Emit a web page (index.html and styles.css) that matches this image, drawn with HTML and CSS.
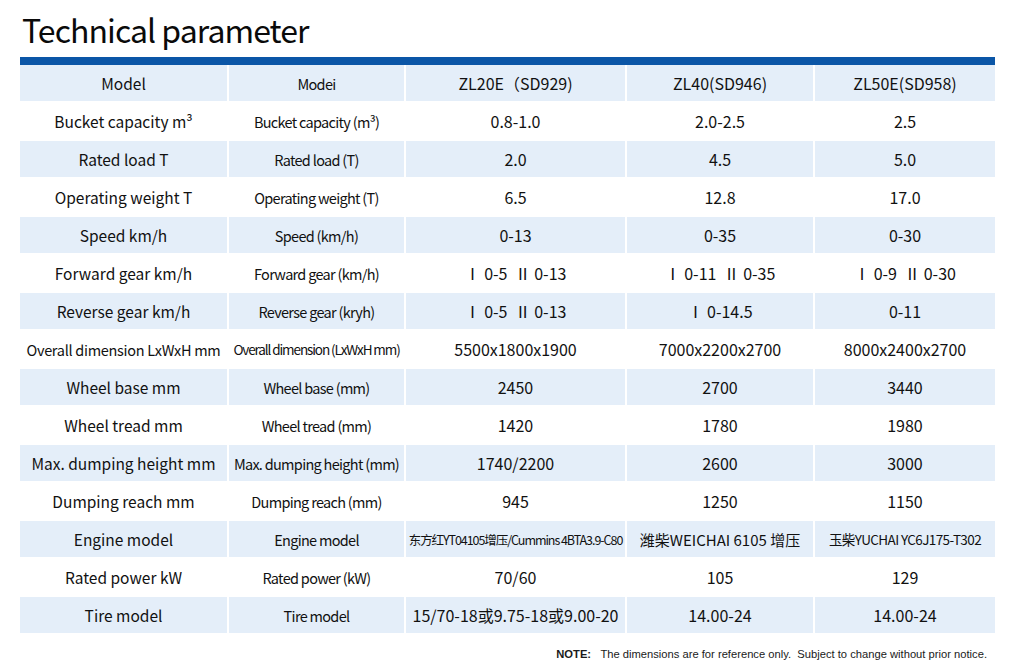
FILE: index.html
```html
<!DOCTYPE html>
<html lang="en">
<head>
<meta charset="utf-8">
<title>Technical parameter</title>
<link rel="stylesheet" href="styles.css">
</head>
<body>
<div class="page">
  <h1 class="title">Technical parameter</h1>
  <div class="bar"></div>
  <div class="table">
    <div class="row shade"><div class="c c1">Model</div><div class="c c2">Modei</div><div class="c">ZL20E（SD929)</div><div class="c">ZL40(SD946)</div><div class="c">ZL50E(SD958)</div></div>
    <div class="row"><div class="c c1">Bucket capacity m³</div><div class="c c2">Bucket capacity (m³)</div><div class="c">0.8-1.0</div><div class="c">2.0-2.5</div><div class="c">2.5</div></div>
    <div class="row shade"><div class="c c1">Rated load T</div><div class="c c2">Rated load (T)</div><div class="c">2.0</div><div class="c">4.5</div><div class="c">5.0</div></div>
    <div class="row"><div class="c c1">Operating weight T</div><div class="c c2">Operating weight (T)</div><div class="c">6.5</div><div class="c">12.8</div><div class="c">17.0</div></div>
    <div class="row shade"><div class="c c1">Speed km/h</div><div class="c c2">Speed (km/h)</div><div class="c">0-13</div><div class="c">0-35</div><div class="c">0-30</div></div>
    <div class="row"><div class="c c1">Forward gear km/h</div><div class="c c2">Forward gear (km/h)</div><div class="c">Ⅰ 0-5&nbsp;&nbsp;Ⅱ 0-13</div><div class="c">Ⅰ 0-11&nbsp;&nbsp;Ⅱ 0-35</div><div class="c">Ⅰ 0-9&nbsp;&nbsp;Ⅱ 0-30</div></div>
    <div class="row shade"><div class="c c1">Reverse gear km/h</div><div class="c c2">Reverse gear (kryh)</div><div class="c">Ⅰ 0-5&nbsp;&nbsp;Ⅱ 0-13</div><div class="c">Ⅰ 0-14.5</div><div class="c">0-11</div></div>
    <div class="row"><div class="c c1 tight">Overall dimension LxWxH mm</div><div class="c c2 tight2">Overall dimension (LxWxH mm)</div><div class="c">5500x1800x1900</div><div class="c">7000x2200x2700</div><div class="c">8000x2400x2700</div></div>
    <div class="row shade"><div class="c c1">Wheel base mm</div><div class="c c2">Wheel base (mm)</div><div class="c">2450</div><div class="c">2700</div><div class="c">3440</div></div>
    <div class="row"><div class="c c1">Wheel tread mm</div><div class="c c2">Wheel tread (mm)</div><div class="c">1420</div><div class="c">1780</div><div class="c">1980</div></div>
    <div class="row shade"><div class="c c1">Max. dumping height mm</div><div class="c c2">Max. dumping height (mm)</div><div class="c">1740/2200</div><div class="c">2600</div><div class="c">3000</div></div>
    <div class="row"><div class="c c1">Dumping reach mm</div><div class="c c2">Dumping reach (mm)</div><div class="c">945</div><div class="c">1250</div><div class="c">1150</div></div>
    <div class="row shade"><div class="c c1">Engine model</div><div class="c c2">Engine model</div><div class="c narrow">东方红YT04105增压/Cummins 4BTA3.9-C80</div><div class="c narrow3">潍柴WEICHAI 6105 增压</div><div class="c narrow2">玉柴YUCHAI YC6J175-T302</div></div>
    <div class="row"><div class="c c1">Rated power kW</div><div class="c c2">Rated power (kW)</div><div class="c">70/60</div><div class="c">105</div><div class="c">129</div></div>
    <div class="row shade"><div class="c c1">Tire model</div><div class="c c2">Tire model</div><div class="c">15/70-18或9.75-18或9.00-20</div><div class="c">14.00-24</div><div class="c">14.00-24</div></div>
  </div>
  <p class="note"><b>NOTE:</b>&nbsp;&nbsp;&nbsp;The dimensions are for reference only.&nbsp;&nbsp;Subject to change without prior notice.</p>
</div>
</body>
</html>
```
FILE: styles.css
```css
html, body {
  margin: 0;
  padding: 0;
  background: #ffffff;
}
body {
  font-family: "Noto Sans CJK SC", "Noto Sans", sans-serif;
  color: #111;
}
.page {
  width: 975px;
  padding-left: 20px;
}
.title {
  margin: 0;
  padding: 7px 0 0 2px;
  font-size: 32px;
  font-weight: 400;
  letter-spacing: -0.95px;
  line-height: 44px;
  height: 50px;
  color: #0a0a0a;
}
.bar {
  height: 8px;
  background: #0b56a7;
}
.table {
  display: flex;
  flex-direction: column;
  gap: 2px;
}
.row {
  display: grid;
  grid-template-columns: 207px 175px 219px 186px 180px;
  column-gap: 2px;
  height: 36px;
}
.row.shade .c {
  background: #e4eef9;
}
.c {
  display: flex;
  align-items: center;
  justify-content: center;
  font-size: 16px;
  white-space: nowrap;
  overflow: hidden;
}
.c1 {
  font-size: 15.5px;
}
.c2 {
  font-size: 14.5px;
  letter-spacing: -0.7px;
}
.tight {
  font-size: 14.5px;
  letter-spacing: -0.3px;
}
.tight2 {
  font-size: 13.5px;
  letter-spacing: -1.1px;
}
.narrow {
  font-size: 12.5px;
  letter-spacing: -1.05px;
}
.narrow2 {
  font-size: 13.5px;
  letter-spacing: -0.6px;
}
.narrow3 {
  font-size: 15px;
}
.note {
  margin: 15px 8px 0 0;
  text-align: right;
  font-family: "Liberation Sans", Arial, sans-serif;
  font-size: 11.2px;
  color: #1a1a1a;
}
.note b {
  font-weight: 700;
}
```
